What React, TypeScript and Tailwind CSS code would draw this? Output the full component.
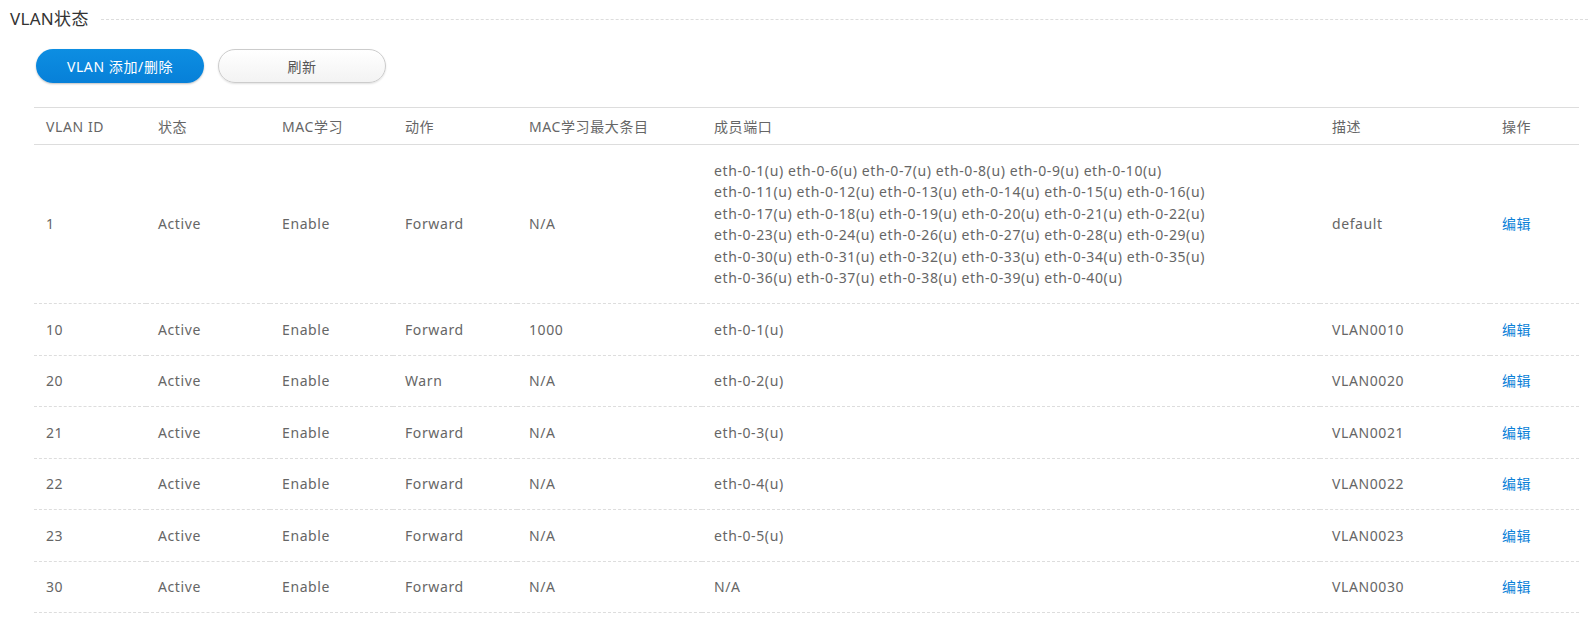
import React from 'react';

type Row = {
  id: string;
  state: string;
  mac: string;
  action: string;
  max: string;
  ports: string[];
  desc: string;
};

const bigPorts = [
  'eth-0-1(u) eth-0-6(u) eth-0-7(u) eth-0-8(u) eth-0-9(u) eth-0-10(u)',
  'eth-0-11(u) eth-0-12(u) eth-0-13(u) eth-0-14(u) eth-0-15(u) eth-0-16(u)',
  'eth-0-17(u) eth-0-18(u) eth-0-19(u) eth-0-20(u) eth-0-21(u) eth-0-22(u)',
  'eth-0-23(u) eth-0-24(u) eth-0-26(u) eth-0-27(u) eth-0-28(u) eth-0-29(u)',
  'eth-0-30(u) eth-0-31(u) eth-0-32(u) eth-0-33(u) eth-0-34(u) eth-0-35(u)',
  'eth-0-36(u) eth-0-37(u) eth-0-38(u) eth-0-39(u) eth-0-40(u)',
];

const rows: Row[] = [
  { id: '1', state: 'Active', mac: 'Enable', action: 'Forward', max: 'N/A', ports: bigPorts, desc: 'default' },
  { id: '10', state: 'Active', mac: 'Enable', action: 'Forward', max: '1000', ports: ['eth-0-1(u)'], desc: 'VLAN0010' },
  { id: '20', state: 'Active', mac: 'Enable', action: 'Warn', max: 'N/A', ports: ['eth-0-2(u)'], desc: 'VLAN0020' },
  { id: '21', state: 'Active', mac: 'Enable', action: 'Forward', max: 'N/A', ports: ['eth-0-3(u)'], desc: 'VLAN0021' },
  { id: '22', state: 'Active', mac: 'Enable', action: 'Forward', max: 'N/A', ports: ['eth-0-4(u)'], desc: 'VLAN0022' },
  { id: '23', state: 'Active', mac: 'Enable', action: 'Forward', max: 'N/A', ports: ['eth-0-5(u)'], desc: 'VLAN0023' },
  { id: '30', state: 'Active', mac: 'Enable', action: 'Forward', max: 'N/A', ports: ['N/A'], desc: 'VLAN0030' },
];

const headers = ['VLAN ID', '状态', 'MAC学习', '动作', 'MAC学习最大条目', '成员端口', '描述', '操作'];
const widths = ['w-[112px]', 'w-[124px]', 'w-[123px]', 'w-[124px]', 'w-[185px]', 'w-[618px]', 'w-[170px]', 'w-[89px]'];

const cell = 'px-[12px] py-[14.5px] leading-[21.5px]';

export default function App() {
  return (
    <div className="min-h-[632px] bg-white text-[14px] tracking-[0.6px] text-[#666] font-['Noto_Sans','Noto_Sans_CJK_SC',sans-serif]">
      {/* Section title */}
      <div className="flex items-center pl-[10px] pt-[6px]">
        <h2 className="text-[17px] leading-[26px] tracking-[0.3px] text-[#333]">VLAN状态</h2>
        <div className="flex-1 ml-[12px] border-t border-dashed border-[#ddd]" />
      </div>

      {/* Buttons */}
      <div className="flex gap-[14px] pl-[36px] pt-[17px]">
        <button className="w-[168px] h-[34px] rounded-full bg-gradient-to-b from-[#0d8ee2] to-[#0780d8] text-white text-[14px] tracking-[0.6px] shadow-[0_1px_2px_rgba(0,0,0,0.25)]">
          VLAN 添加/删除
        </button>
        <button className="w-[168px] h-[34px] rounded-full border border-[#ccc] bg-gradient-to-b from-white to-[#f3f3f3] text-[#555] text-[14px] shadow-[0_1px_2px_rgba(0,0,0,0.12)]">
          刷新
        </button>
      </div>

      {/* Table */}
      <div className="pl-[34px] pr-[9px] pt-[24px]">
        <table className="w-full border-collapse table-fixed">
          <thead>
            <tr className="border-t border-b border-[#ddd]">
              {headers.map((h, i) => (
                <th key={h} className={`${widths[i]} text-left font-normal px-[12px] h-[37px] leading-[21px] text-[#666]`}>
                  {h}
                </th>
              ))}
            </tr>
          </thead>
          <tbody>
            {rows.map((r) => (
              <tr key={r.id} className="border-b border-dashed border-[#ddd]">
                <td className={cell}>{r.id}</td>
                <td className={cell}>{r.state}</td>
                <td className={cell}>{r.mac}</td>
                <td className={cell}>{r.action}</td>
                <td className={cell}>{r.max}</td>
                <td className={cell}>
                  {r.ports.map((p) => (
                    <div key={p}>{p}</div>
                  ))}
                </td>
                <td className={cell}>{r.desc}</td>
                <td className={cell}>
                  <a href="#" className="text-[#0a7fd8]">编辑</a>
                </td>
              </tr>
            ))}
          </tbody>
        </table>
      </div>
    </div>
  );
}
